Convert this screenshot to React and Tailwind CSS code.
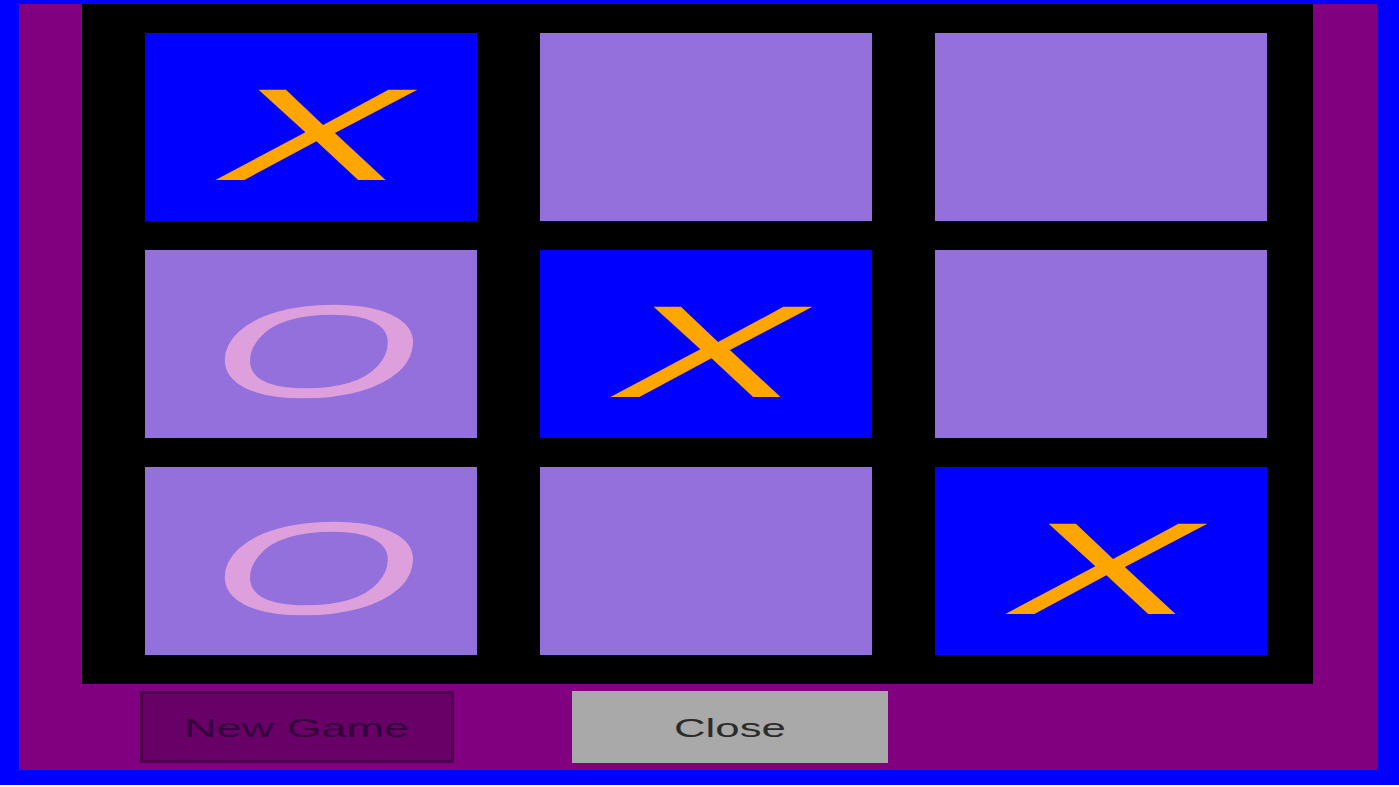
const BOARD = [
  ['X', '', ''],
  ['O', 'X', ''],
  ['O', '', 'X'],
];

function Cell({ mark }) {
  const bg = mark === 'X' ? 'bg-[#0000ff]' : 'bg-[#9370db]';
  return (
    <div className={`${bg} flex items-center justify-center overflow-hidden`}>
      {mark === 'X' && (
        <span
          className="inline-block text-[131px] leading-none italic text-[#ffa500] scale-x-[2.15] translate-x-[4px] translate-y-[7px]"
          style={{ fontFamily: '"Liberation Sans", Arial, sans-serif' }}
        >
          X
        </span>
      )}
      {mark === 'O' && (
        <span
          className="inline-block text-[132px] leading-none italic text-[#dda0dd] scale-x-[2.05] translate-x-[4px] translate-y-[8px]"
          style={{ fontFamily: '"Liberation Sans", Arial, sans-serif' }}
        >
          O
        </span>
      )}
    </div>
  );
}

export default function App() {
  return (
    <div className="h-[785px] w-[1399px] bg-[#0000ff] pt-[4px] pl-[19px] pr-[22px] pb-[15px]">
      <div className="h-full bg-[#800080] flex flex-col">
        <div className="ml-[63px] w-[1231px] h-[680px] bg-black pt-[29px] pl-[63px] pr-[46px] pb-[29px] grid grid-cols-3 grid-rows-3 gap-x-[63px] gap-y-[29px]">
          {BOARD.flat().map((mark, i) => (
            <Cell key={i} mark={mark} />
          ))}
        </div>

        <div
          className="flex mt-[7px] pl-[121px] gap-[118px]"
          style={{ fontFamily: '"Liberation Sans", Arial, sans-serif' }}
        >
          <button className="w-[314px] h-[72px] bg-[#680068] border-[3px] border-[#4c004c] flex items-center justify-center">
            <span className="inline-block text-[25px] text-[#33003a] scale-x-[1.8] translate-y-[2px]">
              New Game
            </span>
          </button>
          <button className="w-[316px] h-[72px] bg-[#a9a9a9] flex items-center justify-center">
            <span className="inline-block text-[25px] text-[#2b2b2b] scale-x-[1.75] translate-y-[2px]">
              Close
            </span>
          </button>
        </div>
      </div>
    </div>
  );
}
